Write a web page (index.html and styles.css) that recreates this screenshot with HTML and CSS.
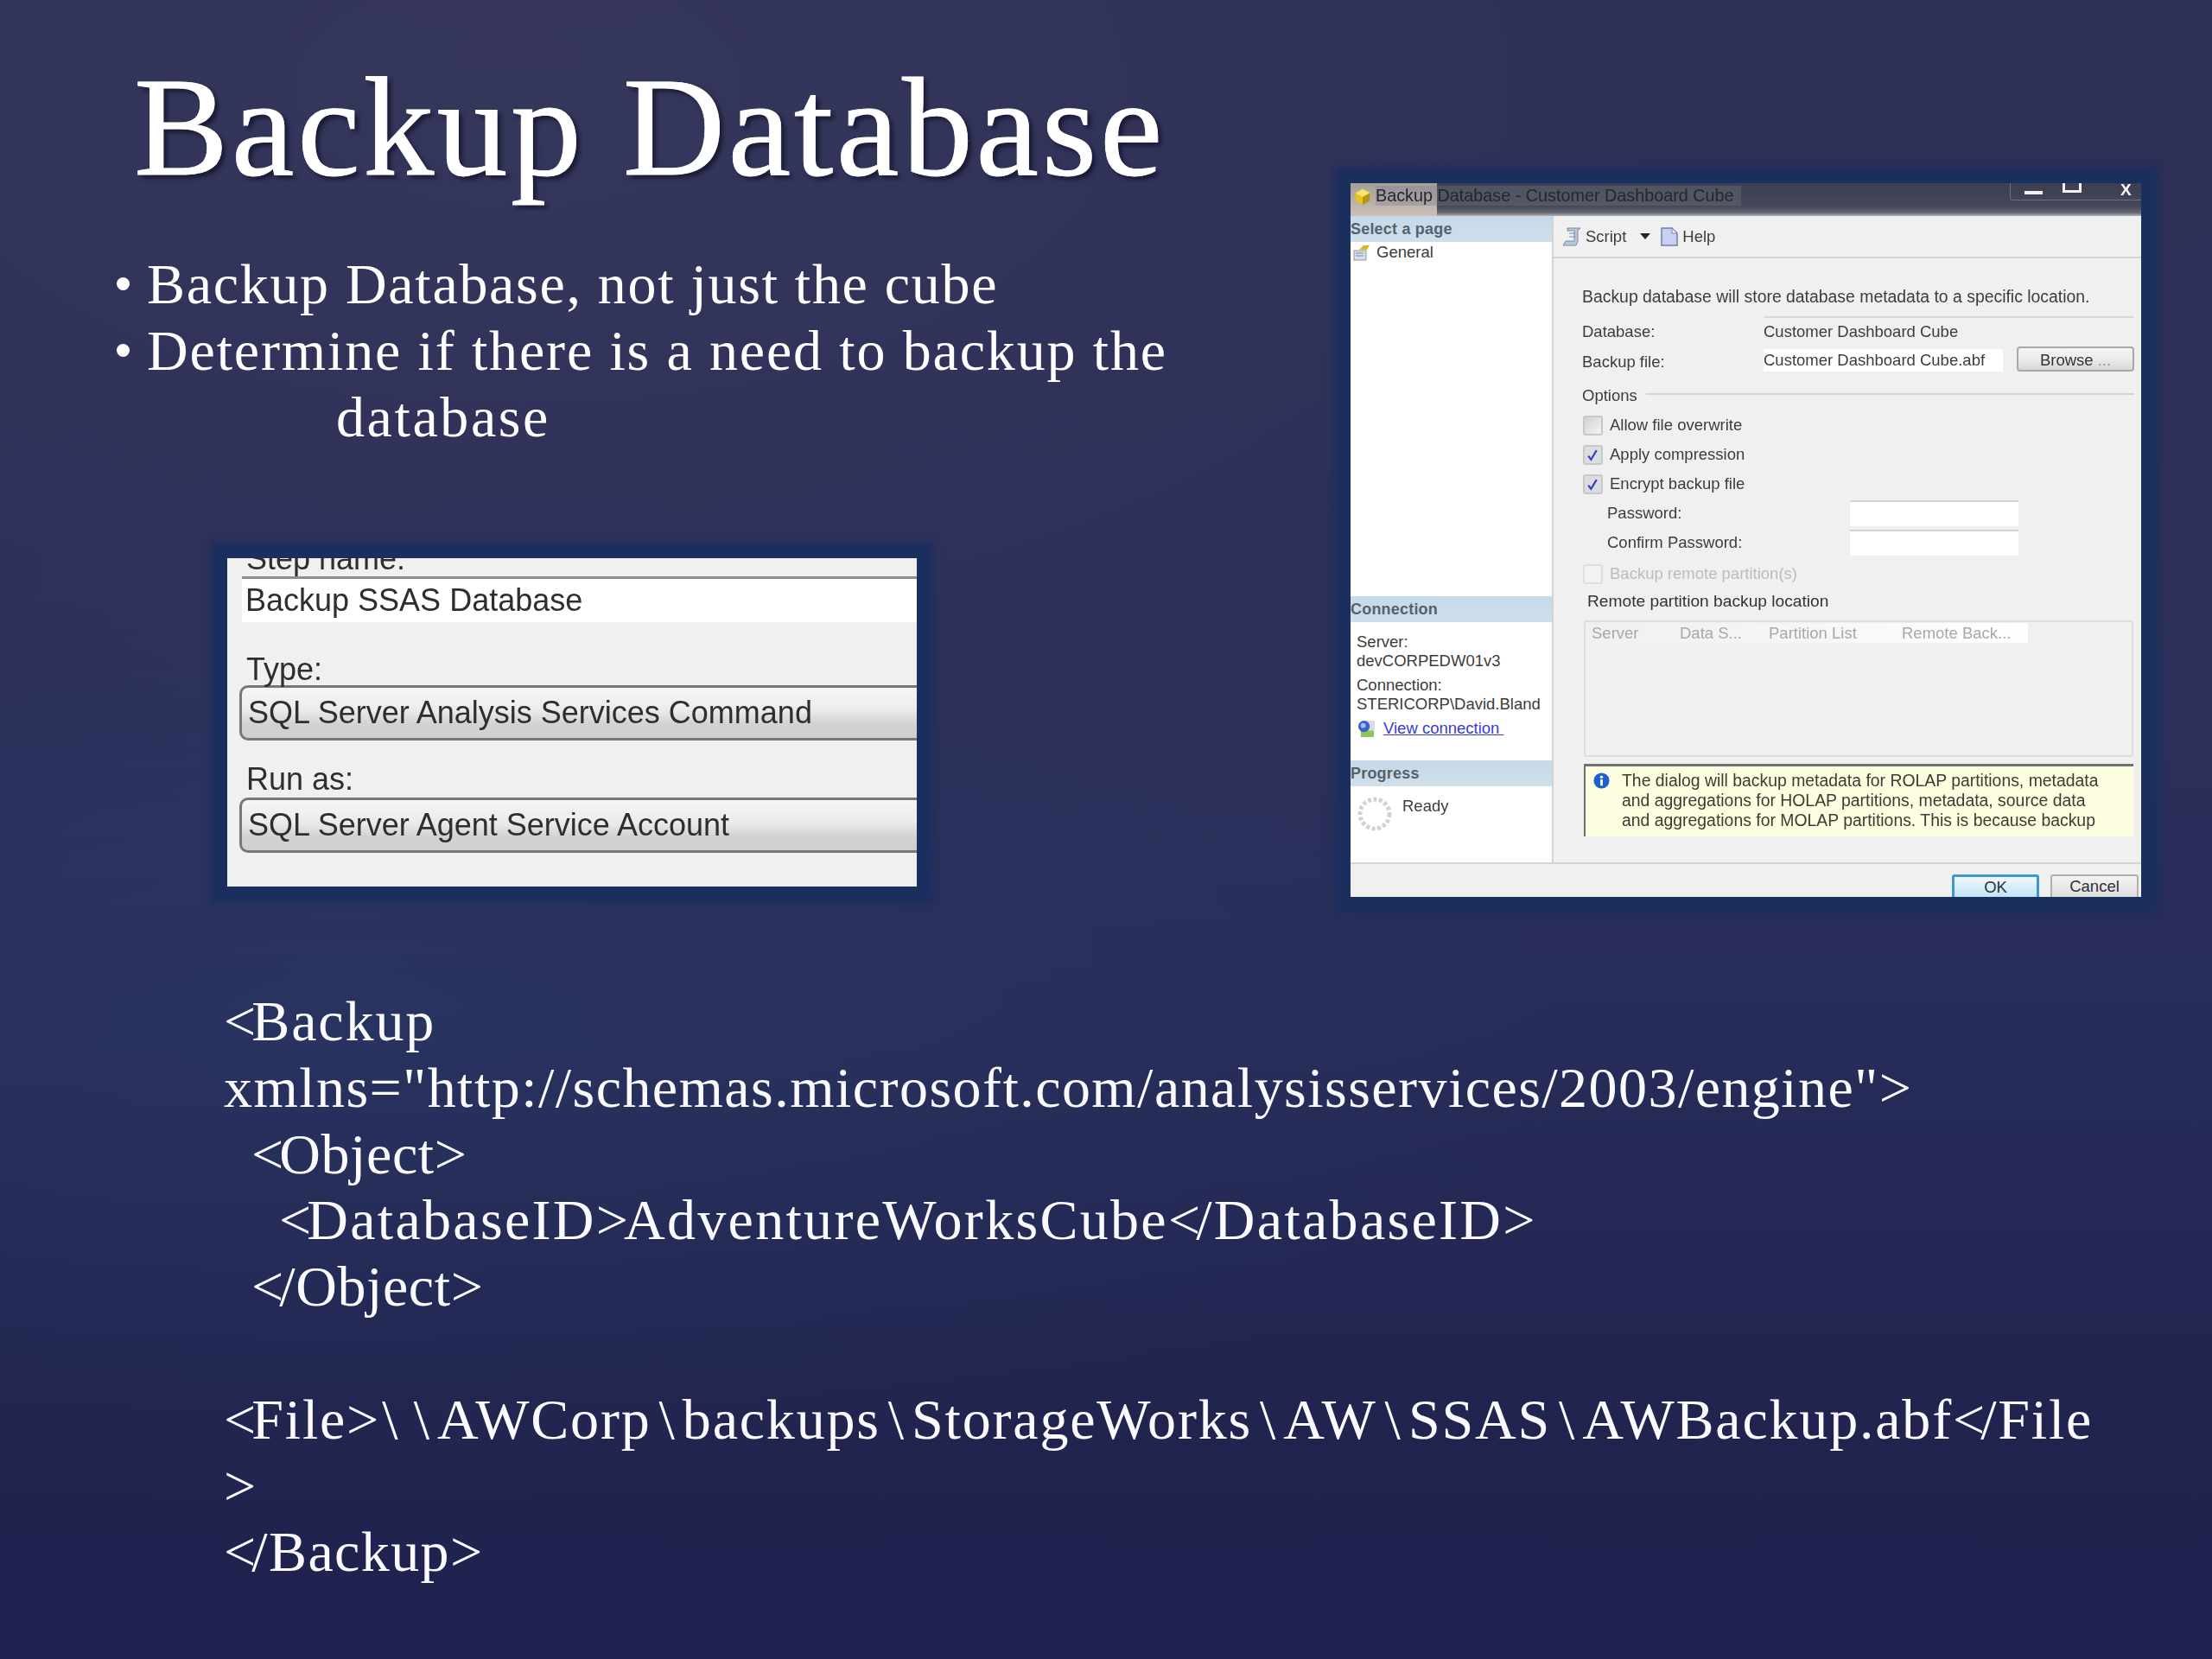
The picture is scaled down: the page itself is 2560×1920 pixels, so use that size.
FILE: index.html
```html
<!DOCTYPE html>
<html lang="en">
<head>
<meta charset="utf-8">
<title>Backup Database</title>
<link rel="stylesheet" href="styles.css">
</head>
<body>
<main class="slide">
  <div class="top">
    <section class="lead">
      <h1 class="title">Backup Database</h1>
      <ul class="bullets">
        <li class="b-first">Backup Database, not just the cube</li>
        <li>Determine if there is a need to backup the</li>
        <li class="cont">database</li>
      </ul>
      <div class="step">
        <div class="step-label step-clip"><span class="step-clip-text">Step name:</span></div>
        <div class="step-input">Backup SSAS Database</div>
        <div class="step-label step-type">Type:</div>
        <div class="step-combo">SQL Server Analysis Services Command</div>
        <div class="step-label step-run">Run as:</div>
        <div class="step-combo">SQL Server Agent Service Account</div>
      </div>
    </section>

    <section class="dialog">
      <div class="titlebar">
        <div class="title-glow"></div>
        <svg class="ic-cube" viewBox="0 0 22 24"><path d="M11 3l9 5v10l-9 5-9-5V8z" fill="#e6c41c"/><path d="M11 13l9-5v10l-9 5z" fill="#b3960f"/><path d="M11 3l9 5-9 5-9-5z" fill="#f6e668"/></svg>
        <span class="title-text">Backup Database - Customer Dashboard Cube</span>
        <div class="winbtns">
          <span class="win-min"></span>
          <span class="win-max"></span>
          <span class="win-close">X</span>
        </div>
      </div>
      <div class="dlg-main">
        <aside class="side">
          <div class="side-head">Select a page</div>
          <div class="side-general">
            <svg class="ic-gen" viewBox="0 0 20 20"><rect x="1" y="8" width="14" height="11" fill="#d8dfe8" stroke="#8a96a8"/><path d="M3 11h9M3 14h9" stroke="#7f8a9a"/><path d="M7 7l5-5h7l-3 5z" fill="#dcb820"/></svg>
            <span>General</span>
          </div>
          <div class="side-fill"></div>
          <div class="side-head">Connection</div>
          <div class="conn">
            <div>Server:</div>
            <div>devCORPEDW01v3</div>
            <div class="conn-gap">Connection:</div>
            <div>STERICORP\David.Bland</div>
            <div class="conn-link">
              <svg class="ic-view" viewBox="0 0 22 22"><rect x="9" y="1" width="12" height="12" fill="#d6dbe4"/><rect x="4" y="13" width="16" height="8" fill="#8ec65a"/><circle cx="8" cy="8" r="7" fill="#3a62c8"/><circle cx="7" cy="7" r="3" fill="#9fc0ee"/></svg>
              <a class="link">View connection&nbsp;</a>
            </div>
          </div>
          <div class="side-head">Progress</div>
          <div class="progress">
            <svg class="ic-spin" viewBox="0 0 40 40"><circle cx="20" cy="20" r="17" fill="none" stroke="#d2d2d2" stroke-width="5" stroke-dasharray="4 2.5"/></svg>
            <span>Ready</span>
          </div>
        </aside>
        <div class="pane">
          <div class="toolbar">
            <svg class="ic-script" viewBox="0 0 24 24"><path d="M7 2h15l-3 3v12l-2 5H2l3-5h10V5H7z" fill="#b9c6da" stroke="#7a8aa6"/><path d="M9 8h7M9 12h7" stroke="#7a8aa6"/></svg>
            <span>Script</span>
            <span class="caret"></span>
            <svg class="ic-help" viewBox="0 0 24 24"><path d="M3 2h12l6 6v14H3z" fill="#c8d2f0" stroke="#6f7fae" stroke-width="1.5"/><path d="M15 2v6h6z" fill="#fff" stroke="#6f7fae"/></svg>
            <span>Help</span>
          </div>
          <div class="form">
            <div class="desc">Backup database will store database metadata to a specific location.</div>
            <div class="row row-kv"><span class="key">Database:</span><span class="val val-line">Customer Dashboard Cube</span></div>
            <div class="row row-kv">
              <span class="key">Backup file:</span>
              <span class="val val-input">Customer Dashboard Cube.abf</span>
              <span class="browse">Browse <i class="dots">...</i></span>
            </div>
            <div class="row row-opt"><span>Options</span><span class="opt-rule"></span></div>
            <div class="row row-check"><span class="box"></span><span>Allow file overwrite</span></div>
            <div class="row row-check"><span class="box box-on"><svg class="tick" viewBox="0 0 14 14"><path d="M2 8l3 4 6-10" fill="none" stroke="#3540b8" stroke-width="2"/></svg></span><span>Apply compression</span></div>
            <div class="row row-check"><span class="box box-on"><svg class="tick" viewBox="0 0 14 14"><path d="M2 8l3 4 6-10" fill="none" stroke="#3540b8" stroke-width="2"/></svg></span><span>Encrypt backup file</span></div>
            <div class="row row-pw"><span class="pw-key">Password:</span><span class="pw-input"></span></div>
            <div class="row row-pw"><span class="pw-key">Confirm Password:</span><span class="pw-input"></span></div>
            <div class="row row-check row-off"><span class="box box-off"></span><span>Backup remote partition(s)</span></div>
            <div class="row row-remote">Remote partition backup location</div>
            <div class="list">
              <div class="list-head">
                <span class="col col-a">Server</span>
                <span class="col col-b">Data S...</span>
                <span class="col col-c">Partition List</span>
                <span class="col col-d">Remote Back...</span>
              </div>
            </div>
            <div class="info">
              <svg class="ic-info" viewBox="0 0 20 20"><circle cx="10" cy="10" r="9.5" fill="#1d5fd0"/><circle cx="10" cy="5.5" r="1.8" fill="#fff"/><rect x="8.5" y="8.5" width="3" height="7.5" fill="#fff"/></svg>
              <p class="info-text">The dialog will backup metadata for ROLAP partitions, metadata<br>and aggregations for HOLAP partitions, metadata, source data<br>and aggregations for MOLAP partitions. This is because backup</p>
            </div>
          </div>
        </div>
      </div>
      <div class="dlg-foot">
        <span class="btn btn-ok">OK</span>
        <span class="btn btn-cancel">Cancel</span>
      </div>
    </section>
  </div>

  <div class="code">
    <div class="line l-open"><span class="ab">&lt;</span>Backup</div>
    <div class="line l-url">xmlns="http://schemas.microsoft.com/analysisservices/2003/engine"&gt;</div>
    <div class="line ind1"><span class="ab">&lt;</span>Object<span class="ab">&gt;</span></div>
    <div class="line ind2"><span class="ab">&lt;</span>DatabaseID<span class="ab">&gt;</span>AdventureWorksCube<span class="ab">&lt;</span>/DatabaseID<span class="ab">&gt;</span></div>
    <div class="line ind1"><span class="ab">&lt;</span>/Object<span class="ab">&gt;</span></div>
    <div class="line"></div>
    <div class="line l-file"><span class="ab">&lt;</span>File<span class="ab">&gt;</span><span class="bs">\</span><span class="bs">\</span>AWCorp<span class="bs">\</span>backups<span class="bs">\</span>StorageWorks<span class="bs">\</span>AW<span class="bs">\</span>SSAS<span class="bs">\</span>AWBackup.abf<span class="ab">&lt;</span>/File</div>
    <div class="line">&gt;</div>
    <div class="line"><span class="ab">&lt;</span>/Backup<span class="ab">&gt;</span></div>
  </div>
</main>
</body>
</html>
```

FILE: styles.css
```css
* { box-sizing: border-box; }
html, body { margin: 0; padding: 0; }
body { width: 2560px; height: 1920px; overflow: hidden; background: #282b56; }

.slide {
  width: 2560px;
  height: 1920px;
  overflow: hidden;
  color: #fff;
  font-family: "Liberation Serif", "Times New Roman", serif;
  background:
    radial-gradient(ellipse 1400px 560px at 400px 1180px, rgba(42,70,112,.28), rgba(42,70,112,0) 100%),
    radial-gradient(ellipse 1500px 800px at 600px 100px, rgba(70,72,100,.30), rgba(70,72,100,0) 100%),
    linear-gradient(180deg, #2e2f56 0%, #2c2f5a 45%, #282c59 62%, #21244f 85%, #1f224e 100%);
}

.top { display: flex; height: 1100px; }
.lead { width: 1563px; flex: none; }

.title {
  margin: 62px 0 0 155px;
  font-size: 164px;
  font-weight: 400;
  line-height: 170px;
  height: 170px;
  letter-spacing: 3.4px;
  white-space: nowrap;
  -webkit-text-stroke: .8px #fff;
  text-shadow: 4px 4px 5px rgba(10,10,30,.65);
}

.bullets {
  list-style: none;
  margin: 59px 0 0 0;
  padding: 0;
  font-size: 66px;
  line-height: 76.8px;
  letter-spacing: 1.85px;
}
.bullets li { position: relative; padding-left: 170px; white-space: nowrap; }
.bullets li.b-first { letter-spacing: 1.7px; }
.bullets li::before {
  content: "";
  position: absolute;
  left: 135px;
  top: 30px;
  width: 15px;
  height: 15px;
  border-radius: 50%;
  background: #fff;
}
.bullets li.cont { padding-left: 389px; letter-spacing: 2.6px; }
.bullets li.cont::before { display: none; }

.step {
  width: 798px;
  height: 380px;
  margin: 125px 0 0 263px;
  background: #f0f0f0;
  color: #2e2e2e;
  font-family: "Liberation Sans", Arial, sans-serif;
  font-size: 36px;
  overflow: hidden;
  box-shadow: 0 0 7px 19px #1b2f5e;
  filter: blur(.7px);
}
.step-label { line-height: 38px; padding-left: 22px; white-space: nowrap; }
.step-clip { height: 21px; overflow: hidden; }
.step-clip-text { display: block; margin-top: -18px; }
.step-type { height: 37px; margin-top: 36px; }
.step-run { height: 40px; margin-top: 26px; }
.step-input {
  height: 53px;
  margin-left: 17px;
  padding-left: 4px;
  line-height: 50px;
  background: #fff;
  border-top: 3px solid #8d8d8d;
}
.step-combo {
  height: 64px;
  margin-left: 14px;
  padding-left: 7px;
  line-height: 58px;
  border: 3px solid #777;
  border-right: 0;
  border-radius: 10px 0 0 10px;
  background: linear-gradient(180deg, #f6f6f6 0%, #ebebeb 45%, #d2d2d2 72%, #cfcfcf 100%);
  white-space: nowrap;
}

.dialog {
  flex: none;
  width: 915px;
  height: 826px;
  margin-top: 212px;
  display: flex;
  flex-direction: column;
  overflow: hidden;
  position: relative;
  background: #f0f0f0;
  color: #3c3c3c;
  font-family: "Liberation Sans", Arial, sans-serif;
  font-size: 18.5px;
  box-shadow: 0 0 7px 19px #1b2f5e;
  filter: blur(.6px);
}

.titlebar {
  position: relative;
  height: 38px;
  flex: none;
  display: flex;
  align-items: center;
  padding-bottom: 9px;
  background: linear-gradient(180deg, #3a3f52 0%, #444857 70%, #676a74 90%, #b0b2b6 100%);
  color: #24262e;
  font-size: 19.8px;
}
.title-glow {
  position: absolute;
  left: 0;
  top: 0;
  width: 100px;
  height: 100%;
  background: linear-gradient(180deg, #a69e9a, #c8bfb8);
}
.ic-cube { position: relative; width: 20px; height: 24px; margin-left: 4px; flex: none; }
.title-text {
  position: relative;
  margin-left: 5px;
  padding-right: 8px;
  white-space: nowrap;
  background: rgba(120,124,134,.32);
}
.winbtns {
  position: absolute;
  right: 0;
  top: 0;
  width: 152px;
  height: 20px;
  border: 1px solid #6d7080;
  border-width: 0 0 1px 1px;
  border-bottom-left-radius: 4px;
  color: #fff;
}
.win-min { position: absolute; left: 16px; top: 9px; width: 21px; height: 4px; background: #f2f2f2; }
.win-max { position: absolute; left: 60px; top: -2px; width: 22px; height: 13px; border: 3px solid #f2f2f2; border-top: 0; }
.win-close { position: absolute; left: 127px; top: -3px; font-size: 19px; font-weight: 700; }

.dlg-main { display: flex; height: 748px; flex: none; }
.side {
  width: 235px;
  flex: none;
  display: flex;
  flex-direction: column;
  background: #fff;
  border-right: 2px solid #d4d4d4;
}
.side-head {
  height: 30px;
  flex: none;
  line-height: 30px;
  background: linear-gradient(180deg, #c6d9e8, #cfdfeb);
  color: #56626a;
  font-weight: 700;
  font-size: 18px;
  letter-spacing: .2px;
}
.side-general { display: flex; align-items: center; height: 24px; margin-top: 0; gap: 7px; padding-left: 3px; }
.ic-gen { width: 20px; height: 20px; flex: none; }
.side-fill { height: 386px; flex: none; }
.conn { height: 160px; flex: none; padding: 12px 0 0 7px; line-height: 22px; font-size: 18.5px; white-space: nowrap; }
.conn-gap { margin-top: 6px; }
.conn-link { display: flex; align-items: center; gap: 9px; margin-top: 6px; padding-left: 1px; }
.ic-view { width: 21px; height: 21px; flex: none; }
.link { color: #3a3ad6; text-decoration: underline; }
.progress { display: flex; gap: 12px; padding: 12px 0 0 8px; }
.progress span { line-height: 22px; }
.ic-spin { width: 40px; height: 40px; flex: none; }

.pane { flex: 1; min-width: 0; }
.toolbar {
  height: 49px;
  display: flex;
  align-items: center;
  padding-left: 9px;
  border-bottom: 2px solid #d4d4d4;
}
.ic-script { width: 24px; height: 24px; margin-right: 4px; }
.caret { width: 0; height: 0; margin: 0 10px 0 16px; border: 6px solid transparent; border-top: 7px solid #222; border-bottom: 0; }
.ic-help { width: 24px; height: 24px; margin-right: 3px; }

.form { padding: 30px 8px 0 33px; }
.desc { height: 37px; line-height: 28px; font-size: 19.4px; white-space: nowrap; }
.row { display: flex; align-items: center; height: 34px; white-space: nowrap; }
.row-kv { height: 35px; position: relative; }
.key { width: 210px; flex: none; }
.val { position: relative; height: 100%; display: flex; align-items: center; flex: none; }
.val-line { width: 428px; border-top: 2px solid #d8d8d8; padding-bottom: 2px; }
.val-input { width: 277px; height: 26px; align-self: flex-start; margin-top: 3px; background: #fff; }
.browse {
  width: 136px;
  height: 29px;
  align-self: flex-start;
  margin-left: 16px;
  text-align: center;
  line-height: 27px;
  border: 2px solid #a8a8a8;
  border-radius: 4px;
  background: linear-gradient(180deg, #f4f4f4 0%, #ececec 50%, #d6d6d6 100%);
  color: #333;
}
.dots { font-style: normal; color: #999; }
.row-opt { margin-top: 5px; gap: 10px; }
.opt-rule { flex: 1; height: 2px; background: #d4d4d4; margin-top: -4px; }
.row-check { gap: 8px; }
.box {
  display: block;
  width: 23px;
  height: 23px;
  margin-left: 1px;
  border: 2px solid #c8c8c8;
  border-radius: 3px;
  background: linear-gradient(135deg, #d0d0d0, #f4f4f4);
}
.box-on { background: #dcdde2; padding: 2px; }
.tick { display: block; width: 15px; height: 15px; }
.box-off { background: #f2f2f2; border-color: #dedede; }
.row-pw { position: relative; }
.pw-key { width: 310px; padding-left: 29px; flex: none; }
.pw-input { width: 195px; height: 30px; flex: none; background: #fff; border-top: 2px solid #d4d4d4; }
.row-off { margin-top: 2px; color: #bcbcbc; }
.row-remote { height: 30px; padding-left: 6px; color: #333; font-size: 19.2px; }
.list {
  width: 636px;
  height: 158px;
  margin: 7px 0 0 2px;
  border: 2px solid #dcdcdc;
  border-radius: 3px;
  padding-top: 1px;
}
.list-head {
  display: flex;
  width: 512px;
  height: 23px;
  line-height: 23px;
  color: #a8a8a8;
  background: linear-gradient(90deg, #f0f0f0 0%, #f6f6f6 50%, #fff 100%);
}
.col { display: block; flex: none; padding-left: 7px; }
.col-a { width: 102px; }
.col-b { width: 103px; }
.col-c { width: 154px; }
.col-d { width: 153px; }
.info {
  display: flex;
  width: 636px;
  height: 84px;
  margin: 8px 0 0 2px;
  padding: 5px 0 0 9px;
  background: #fdfee0;
  border-top: 3px solid #707070;
  border-left: 2px solid #707070;
}
.ic-info { width: 19px; height: 19px; margin-top: 2px; flex: none; }
.info-text { margin: 0 0 0 14px; line-height: 23px; font-size: 19.4px; color: #3c3c34; white-space: nowrap; }

.dlg-foot {
  height: 40px;
  flex: none;
  position: relative;
  display: flex;
  justify-content: flex-end;
  gap: 13px;
  padding: 12px 3px 0 0;
  background: #f0f0f0;
  border-top: 2px solid #d4d4d4;
}
.btn { display: block; height: 30px; line-height: 24px; text-align: center; color: #2c3038; border-radius: 3px; }
.btn-ok { width: 101px; border: 3px solid #3a9ad0; background: linear-gradient(180deg, #f2f8fc, #bfe4f6); }
.btn-cancel { width: 102px; border: 2px solid #b0b0b0; background: linear-gradient(180deg, #f4f4f4, #dcdcdc); }

.code {
  margin: 44px 0 0 259px;
  font-size: 66px;
  line-height: 76.8px;
  letter-spacing: 1.4px;
  color: #fbfbff;
}
.line { height: 76.8px; white-space: pre; }
.l-open { letter-spacing: 1.9px; }
.l-url { letter-spacing: 1.45px; }
.l-file { letter-spacing: 1.8px; }
.ind1 { padding-left: 32px; letter-spacing: .6px; }
.ind2 { padding-left: 64px; letter-spacing: 2.3px; }
.ab { letter-spacing: -5px; }
.bs { margin: 0 9px; letter-spacing: 0; }
```
